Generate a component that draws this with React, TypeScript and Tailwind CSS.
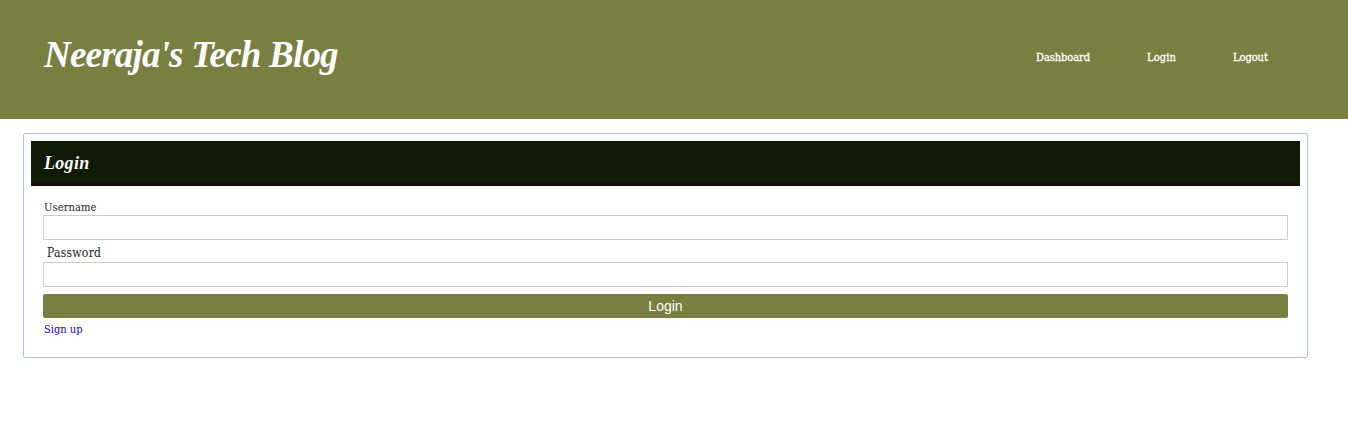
const links = [
  { label: 'Dashboard', style: 'w-[54px] tracking-[-0.05px]' },
  { label: 'Login', style: 'w-[29px] tracking-[0.1px]' },
  { label: 'Logout', style: 'w-[35px] tracking-[-0.05px]' },
];

export default function App() {
  return (
    <div className="min-h-[447px] bg-white font-['DejaVu_Serif_Condensed','DejaVu_Serif',serif] text-[#222]">
      <header className="flex h-[119px] items-start justify-between bg-[#787f40] pl-[44px] pr-[80px] text-white">
        <h1 className="mt-[30px] whitespace-nowrap font-['Liberation_Serif',serif] text-[37px] font-bold italic leading-[50px] tracking-[-0.8px]">
          Neeraja's Tech Blog
        </h1>
        <nav className="mt-[50px] flex gap-[57px] text-[11px] leading-4 [-webkit-text-stroke:0.3px_white]">
          {links.map((l) => (
            <a key={l.label} href="#" className={`whitespace-nowrap ${l.style}`}>
              {l.label}
            </a>
          ))}
        </nav>
      </header>
      <main className="ml-[23px] mt-[14px] h-[225px] w-[1285px] rounded-[2px] border border-[#a9c4ee] p-[7px]">
        <h2 className="h-[45px] border-b-[3px] border-[#160d08] bg-[#0f1a07] pl-[13px] pt-[10px] font-['Liberation_Serif',serif] text-[18px] font-bold italic leading-6 tracking-[0.3px] text-white">
          Login
        </h2>
        <form className="flex flex-col px-3 pt-[14px] text-[11px]" onSubmit={(e) => e.preventDefault()}>
          <label htmlFor="username" className="h-[15px] pl-px leading-4 tracking-[0.12px]">Username</label>
          <input id="username" className="h-[25px] w-full border border-[#ccc] px-2 outline-none" />
          <label htmlFor="password" className="mt-[5px] h-[17px] pl-1 text-[12px] leading-4 tracking-[0.28px]">Password</label>
          <input id="password" type="password" className="h-[25px] w-full border border-[#ccc] px-2 outline-none" />
          <button className="mt-[7px] h-6 rounded-[2px] bg-[#787f40] font-['Liberation_Sans',sans-serif] text-[14px] leading-6 text-white">
            Login
          </button>
          <a href="#" className="mt-1 self-start pl-px leading-4 text-[#1a00ee]">Sign up</a>
        </form>
      </main>
    </div>
  );
}
